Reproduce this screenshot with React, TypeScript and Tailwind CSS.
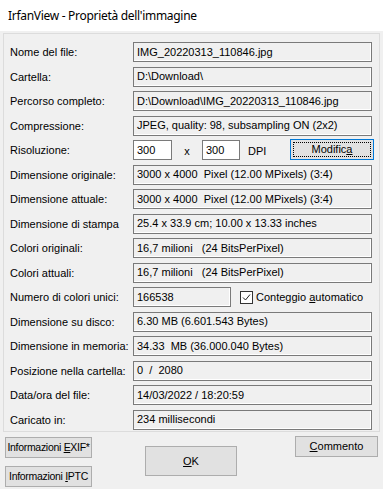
import React from 'react';

const rows: { label: string; value?: string; kind?: 'res' | 'count' }[] = [
  { label: 'Nome del file:', value: 'IMG_20220313_110846.jpg' },
  { label: 'Cartella:', value: 'D:\\Download\\' },
  { label: 'Percorso completo:', value: 'D:\\Download\\IMG_20220313_110846.jpg' },
  { label: 'Compressione:', value: 'JPEG, quality: 98, subsampling ON (2x2)' },
  { label: 'Risoluzione:', kind: 'res' },
  { label: 'Dimensione originale:', value: '3000 x 4000  Pixel (12.00 MPixels) (3:4)' },
  { label: 'Dimensione attuale:', value: '3000 x 4000  Pixel (12.00 MPixels) (3:4)' },
  { label: 'Dimensione di stampa', value: '25.4 x 33.9 cm; 10.00 x 13.33 inches' },
  { label: 'Colori originali:', value: '16,7 milioni   (24 BitsPerPixel)' },
  { label: 'Colori attuali:', value: '16,7 milioni   (24 BitsPerPixel)' },
  { label: 'Numero di colori unici:', value: '166538', kind: 'count' },
  { label: 'Dimensione su disco:', value: '6.30 MB (6.601.543 Bytes)' },
  { label: 'Dimensione in memoria:', value: '34.33  MB (36.000.040 Bytes)' },
  { label: 'Posizione nella cartella:', value: '0  /  2080' },
  { label: 'Data/ora del file:', value: '14/03/2022 / 18:20:59' },
  { label: 'Caricato in:', value: '234 millisecondi' },
];

const field =
  'h-[20px] border border-[#7a7a7a] shadow-[inset_-1px_-1px_0_#ffffff] pl-[3px] flex items-center whitespace-pre overflow-hidden';
const btn =
  'border border-[#adadad] bg-[#e1e1e1] flex items-center justify-center whitespace-pre';

function Field({ value, className = '' }: { value: string; className?: string }) {
  return <div className={`${field} bg-[#f0f0f0] ${className}`}>{value}</div>;
}

export default function App() {
  return (
    <div
      className="w-[383px] h-[489px] bg-[#f0f0f0] text-[11px] text-black overflow-hidden"
      style={{ fontFamily: "'Liberation Sans', Arial, sans-serif" }}
    >
      <div
        className="h-[31px] bg-white flex items-center pl-[8px] text-[12px] tracking-[-0.3px]"
        style={{ fontFamily: "'Noto Sans', 'Open Sans', sans-serif" }}
      >
        IrfanView - Proprietà dell'immagine
      </div>

      <div className="mx-[3px] mt-[2px] h-[399px] border border-[#dcdcdc] pt-[8px] pl-[6px] pr-[7px]">
        {rows.map((r) => (
          <div key={r.label} className="h-[24.5px] flex">
            <div className="w-[123px] shrink-0 pt-[2px] whitespace-nowrap">{r.label}</div>
            {r.kind === 'res' ? (
              <div className="flex items-start flex-1">
                <div className={`${field} bg-white w-[39px]`}>300</div>
                <div className="w-[30px] pt-[3px] text-center">x</div>
                <div className={`${field} bg-white w-[38px]`}>300</div>
                <div className="w-[50px] pt-[3px] pl-[8px]">DPI</div>
                <div className="w-[84px] h-[21px] -mt-[1px] border border-[#0078d7] bg-[#e1e1e1] p-[2px]">
                  <div className="w-full h-full border border-dotted border-black flex items-center justify-center">
                    Modific<span className="underline">a</span>
                  </div>
                </div>
              </div>
            ) : r.kind === 'count' ? (
              <div className="flex items-start flex-1">
                <Field value={r.value!} className="w-[98px]" />
                <div className="ml-[9px] flex items-center h-[20px]">
                  <div className="w-[13px] h-[13px] border border-[#333] bg-white flex items-center justify-center">
                    <svg width="9" height="9" viewBox="0 0 9 9">
                      <path d="M1 4.5 L3.5 7 L8 1.5" fill="none" stroke="#222" strokeWidth="1" />
                    </svg>
                  </div>
                  <span className="ml-[3px]">
                    Conteggio <span className="underline">a</span>utomatico
                  </span>
                </div>
              </div>
            ) : (
              <Field value={r.value!} className="flex-1" />
            )}
          </div>
        ))}
      </div>

      <div className="flex px-[5px] mt-[5px]">
        <div className="flex flex-col gap-[8px] text-[10.5px] tracking-[-0.3px]">
          <div className={`${btn} w-[87px] h-[21px]`}>
            Informazioni <span className="underline">E</span>XIF*
          </div>
          <div className={`${btn} w-[87px] h-[21px]`}>
            Informazioni <span className="underline">I</span>PTC
          </div>
        </div>
        <div className={`${btn} w-[92px] h-[30px] mt-[9px] ml-[53px]`}>
          <span className="underline">O</span>K
        </div>
        <div className={`${btn} w-[83px] h-[21px] ml-[58px] -mt-[1px]`}>
          <span className="underline">C</span>ommento
        </div>
      </div>
    </div>
  );
}
